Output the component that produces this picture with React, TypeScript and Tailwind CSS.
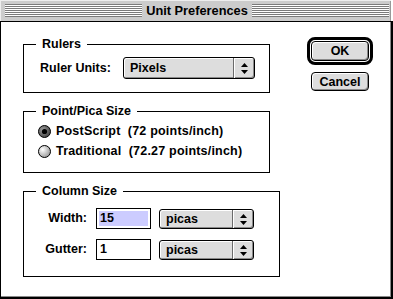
import type { ReactNode } from 'react';

const stripes =
  'h-[13px] flex-1 bg-[repeating-linear-gradient(to_bottom,#7b7b7b_0px,#7b7b7b_1px,#ffffff_1px,#ffffff_2px)]';

const UpDown = () => (
  <svg width="7" height="11" viewBox="0 0 7 11">
    <polygon points="0,4 3.5,0 7,4" fill="#000" />
    <polygon points="0,7 3.5,11 7,7" fill="#000" />
  </svg>
);

const Popup = ({ label, className }: { label: string; className: string }) => (
  <div
    className={`flex rounded-[3px] border border-black bg-[#dddddd] shadow-[inset_1px_1px_0_#ffffff,inset_-1px_-1px_0_#8a8a8a] ${className}`}
  >
    <span className="flex flex-1 items-center pl-[6px]">{label}</span>
    <span className="flex w-[21px] items-center justify-center border-l border-[#6b6b6b] shadow-[inset_1px_0_0_#ffffff]">
      <UpDown />
    </span>
  </div>
);

const Radio = ({ on }: { on?: boolean }) => (
  <svg width="13" height="13" viewBox="0 0 13 13">
    <defs>
      <radialGradient id="rOff" cx="35%" cy="35%" r="70%">
        <stop offset="0" stopColor="#ffffff" />
        <stop offset="1" stopColor="#999999" />
      </radialGradient>
      <radialGradient id="rOn" cx="35%" cy="35%" r="70%">
        <stop offset="0" stopColor="#9a9a9a" />
        <stop offset="1" stopColor="#444444" />
      </radialGradient>
    </defs>
    <circle cx="6.5" cy="6.5" r="6" fill={on ? 'url(#rOn)' : 'url(#rOff)'} stroke="#000" strokeWidth="1" />
    {on && <circle cx="6.5" cy="6.5" r="2.6" fill="#000" />}
  </svg>
);

const Group = ({ title, className, children }: { title: string; className: string; children: ReactNode }) => (
  <div className={`border border-black ${className}`}>
    <div className="-mt-[8px] ml-[12px] w-fit bg-white px-[6px] leading-[14px]">{title}</div>
    {children}
  </div>
);

const Field = ({ value, active }: { value: string; active?: boolean }) => (
  <div className="h-[21px] w-[55px] border border-black p-[2px]">
    <div className={`flex h-full items-center pl-[1px] ${active ? 'bg-[#ccccff]' : 'bg-white'}`}>{value}</div>
  </div>
);

export default function App() {
  return (
    <div className="flex h-[299px] w-[393px] flex-col bg-white font-['Liberation_Sans',Arial,sans-serif] text-[12.5px] font-bold leading-[14px] text-black">
      {/* title bar */}
      <div className="flex h-[21px] w-[391px] items-center bg-[#cccccc] pl-[5px] pr-[2px] shadow-[inset_1px_1px_0_#eeeeee,inset_-1px_0_0_#999999]">
        <div className={stripes} />
        <span className="px-[4px] text-[12.8px]">Unit Preferences</span>
        <div className={stripes} />
      </div>

      {/* body */}
      <div className="flex flex-1 items-start border-t border-l border-r-2 border-b-2 border-black pt-[15px] pl-[22px] shadow-[inset_-1px_-1px_0_#8a8a8a]">
        <div className="w-[257px] pt-[7px]">
          <Group title="Rulers" className="w-[247px] pb-[13px]">
            <div className="mt-[6px] flex items-center pl-[16px]">
              <span className="w-[83px]">Ruler Units:</span>
              <Popup label="Pixels" className="h-[22px] w-[132px]" />
            </div>
          </Group>

          <Group title="Point/Pica Size" className="mt-[18px] w-[247px] pb-[11px]">
            <div className="pt-[3px] tracking-[0.2px]">
              <div className="flex h-[20px] items-center gap-[5px] pl-[14px]">
                <Radio on />
                <span className="whitespace-pre">PostScript  (72 points/inch)</span>
              </div>
              <div className="flex h-[20px] items-center gap-[5px] pl-[14px]">
                <Radio />
                <span className="whitespace-pre">Traditional  (72.27 points/inch)</span>
              </div>
            </div>
          </Group>

          <Group title="Column Size" className="mt-[18px] w-[257px] pb-[16px]">
            <div className="mt-[9px] flex flex-col gap-[9px]">
              <div className="flex items-center">
                <span className="w-[63px] text-right">Width:</span>
                <div className="ml-[9px]">
                  <Field value="15" active />
                </div>
                <Popup label="picas" className="ml-[8px] mt-[2px] h-[20px] w-[95px]" />
              </div>
              <div className="flex items-center">
                <span className="w-[63px] text-right">Gutter:</span>
                <div className="ml-[9px]">
                  <Field value="1" />
                </div>
                <Popup label="picas" className="ml-[8px] mt-[2px] h-[20px] w-[95px]" />
              </div>
            </div>
          </Group>
        </div>

        {/* buttons */}
        <div className="ml-[27px] flex flex-col">
          <div className="h-[28px] w-[66px] rounded-[8px] border-[3px] border-black p-[1px]">
            <button className="flex h-full w-full items-center justify-center rounded-[4px] border border-black bg-[#dddddd] shadow-[inset_1px_1px_0_#ffffff,inset_-1px_-1px_0_#8a8a8a]">
              OK
            </button>
          </div>
          <button className="ml-[4px] mt-[7px] flex h-[19px] w-[58px] items-center justify-center rounded-[4px] border border-black bg-[#dddddd] shadow-[inset_1px_1px_0_#ffffff,inset_-1px_-1px_0_#8a8a8a]">
            Cancel
          </button>
        </div>
      </div>
    </div>
  );
}
